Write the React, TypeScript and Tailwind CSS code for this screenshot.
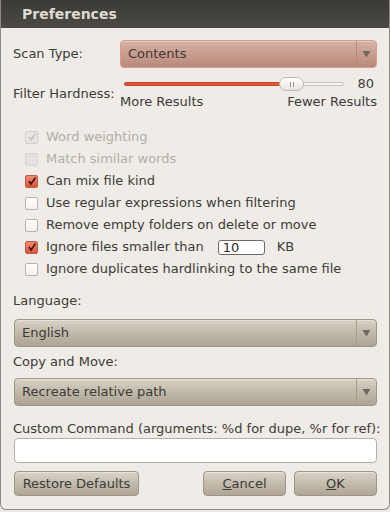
import { useState } from "react";

const font = { fontFamily: '"DejaVu Sans", "Liberation Sans", sans-serif' };

function Arrow() {
  return (
    <svg width="9" height="8" viewBox="0 0 9 8">
      <path d="M0.5 1 L8.5 1 L4.5 7.5 Z" fill="#6e6a62" />
    </svg>
  );
}

function Combo({ value, hot }: { value: string; hot?: boolean }) {
  const box = hot
    ? "border-[#d99a90] bg-gradient-to-b from-[#d6b2a5] via-[#c99d8e] to-[#b98a7b]"
    : "border-[#9d9688] bg-gradient-to-b from-[#d9d3c8] via-[#c0b8a9] to-[#ada494]";
  return (
    <div className={`flex h-[28px] items-center rounded-[4px] border ${box} shadow-[inset_0_1px_0_rgba(255,255,255,0.35)]`}>
      <span className="flex-1 pl-[7px] text-[#3c3b37]">{value}</span>
      <span className={`flex h-full w-[20px] items-center justify-center border-l ${hot ? "border-[#b48a7e]" : "border-[#a49c8d]"}`}>
        <Arrow />
      </span>
    </div>
  );
}

function Check({ checked, disabled }: { checked?: boolean; disabled?: boolean }) {
  if (checked) {
    return (
      <span
        className={`flex h-[13px] w-[13px] items-center justify-center rounded-[2px] border ${
          disabled ? "border-[#d3cfc9] bg-[#e9e6e2]" : "border-[#c85a45] bg-gradient-to-b from-[#f08a70] to-[#d9543c]"
        }`}
      >
        <svg width="10" height="10" viewBox="0 0 10 10">
          <path d="M2 5 L4 8 L8.5 1.5" fill="none" stroke={disabled ? "#c5c1ba" : "#3a1a14"} strokeWidth="1.6" />
        </svg>
      </span>
    );
  }
  return (
    <span
      className={`h-[13px] w-[13px] rounded-[2px] border ${
        disabled ? "border-[#d8d4ce] bg-[#e6e3de]" : "border-[#b9b4ad] bg-gradient-to-b from-white to-[#f3f1ee]"
      }`}
    />
  );
}

function Button({ children, className = "" }: { children: React.ReactNode; className?: string }) {
  return (
    <button className={`flex h-[25px] items-center justify-center rounded-[4px] border border-[#9d9688] bg-gradient-to-b from-[#d9d3c8] via-[#c3bbad] to-[#afa696] text-[#3c3b37] shadow-[inset_0_1px_0_rgba(255,255,255,0.4)] ${className}`}>
      {children}
    </button>
  );
}

export default function App() {
  const [size, setSize] = useState("10");
  const rows = [
    { label: "Word weighting", checked: true, disabled: true },
    { label: "Match similar words", disabled: true },
    { label: "Can mix file kind", checked: true },
    { label: "Use regular expressions when filtering" },
    { label: "Remove empty folders on delete or move" },
    { label: "Ignore files smaller than", checked: true, input: true },
    { label: "Ignore duplicates hardlinking to the same file" },
  ];

  return (
    <div style={font} className="h-[512px] w-[390px] bg-[#ece8e4] text-[13px] text-[#3c3b37]">
      <div className="flex h-[510px] flex-col overflow-hidden rounded-b-[6px] border border-t-0 border-[#8e8a83] bg-[#efebe7]">
        <div className="flex h-[28px] shrink-0 items-center bg-gradient-to-b from-[#3b3a36] to-[#4b4a45] pl-[21px] text-[14px] font-bold text-[#dfdbd2]">
          Preferences
        </div>

        <div className="flex flex-col px-[12px]">
          <div className="mt-[12px] flex items-center">
            <span className="w-[107px]">Scan Type:</span>
            <div className="flex-1">
              <Combo value="Contents" hot />
            </div>
          </div>

          <div className="mt-[8px] flex">
            <span className="mt-[8px] w-[107px] whitespace-nowrap">Filter Hardness:</span>
            <div className="flex flex-1 flex-col">
              <div className="flex h-[16px] items-center">
                <div className="relative ml-[4px] h-[16px] w-[220px]">
                  <div className="absolute left-0 right-0 top-[6px] h-[4px] rounded-full border border-[#c9c4bd] bg-[#f7f5f2]" />
                  <div className="absolute left-0 top-[6px] h-[4px] w-[160px] rounded-full border border-[#c2472f] bg-[#e5573a]" />
                  <div className="absolute left-[155px] top-[1px] flex h-[14px] w-[25px] items-center justify-center gap-[2px] rounded-full border border-[#bdb8b0] bg-gradient-to-b from-white to-[#e7e4df]">
                    <span className="h-[5px] w-px bg-[#9a958d]" />
                    <span className="h-[5px] w-px bg-[#9a958d]" />
                  </div>
                </div>
                <span className="ml-auto mr-[3px]">80</span>
              </div>
              <div className="mt-[1px] flex justify-between leading-[18px]">
                <span>More Results</span>
                <span>Fewer Results</span>
              </div>
            </div>
          </div>

          <div className="mt-[15px] flex flex-col pl-[12px]">
            {rows.map((r) => (
              <div key={r.label} className="flex h-[22px] items-center gap-[8px]">
                <Check checked={r.checked} disabled={r.disabled} />
                <span className={r.disabled ? "text-[#b3aea6]" : ""}>{r.label}</span>
                {r.input && (
                  <>
                    <input
                      value={size}
                      onChange={(e) => setSize(e.target.value)}
                      className="ml-[6px] h-[15px] w-[47px] rounded-[3px] border border-[#6f6b64] bg-white px-[4px] leading-[14px] text-[#2b2a27] outline-none"
                    />
                    <span className="ml-[4px]">KB</span>
                  </>
                )}
              </div>
            ))}
          </div>

          <div className="mt-[12px] leading-[18px]">Language:</div>
          <div className="mt-[9px] ml-px">
            <Combo value="English" />
          </div>
          <div className="mt-[6px] leading-[18px]">Copy and Move:</div>
          <div className="mt-[7px] ml-px">
            <Combo value="Recreate relative path" />
          </div>
          <div className="mt-[14px] whitespace-nowrap leading-[18px]">Custom Command (arguments: %d for dupe, %r for ref):</div>
          <input className="ml-px mt-0 h-[25px] rounded-[4px] border border-[#b4afa7] bg-white outline-none" />

          <div className="ml-px mt-[8px] flex">
            <Button className="w-[125px]">Restore Defaults</Button>
            <Button className="ml-auto w-[83px]">
              <span className="underline">C</span>ancel
            </Button>
            <Button className="ml-[8px] w-[83px]">
              <span className="underline">O</span>K
            </Button>
          </div>
        </div>
      </div>
    </div>
  );
}
